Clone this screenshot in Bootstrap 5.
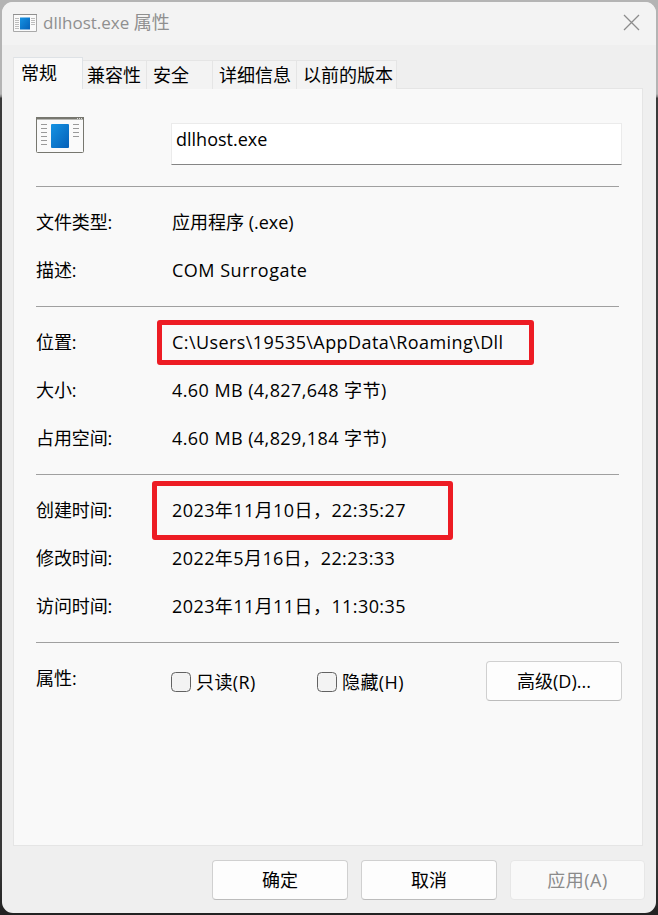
<!DOCTYPE html>
<html lang="zh-CN">
<head>
<meta charset="utf-8">
<meta name="viewport" content="width=device-width, initial-scale=1">
<title>dllhost.exe 属性</title>
<link href="https://cdn.jsdelivr.net/npm/bootstrap@5.3.0/dist/css/bootstrap.min.css" rel="stylesheet">
<style>
body{height:915px;overflow:hidden;padding:2px;font:18px/24px "Open Sans","Noto Sans CJK SC",sans-serif;color:#000;
background:linear-gradient(#b4b4b4 0,#b4b4b4 94px,#777 97px,#3a3a3a 98px,#383838 860px,#222 915px)}
.dialog{height:911px;background:#efefef;border-radius:11px}
.titlebar{height:43px;background:#f3f3f3;color:#8f8f8f;padding:0 16px 2px 11px}
.titlebar .caption{margin-left:6px;font-size:17px}
.caption .zh{font-size:18px}
.tabs{height:31px;margin:12px 11px 0;position:relative;z-index:1}
.tabs .nav-link{height:29px;padding:2px 0 0 6px;color:#000;background:#f3f3f3;border:1px solid #e5e5e5;border-left:0;border-bottom:0;border-radius:0;line-height:24px;white-space:nowrap}
.tabs .nav-link.active{height:32px;width:70px;padding:3px 0 0 7px;background:#f9f9f9;border-left:1px solid #e5e5e5;margin-bottom:-1px}
.tabs .t2{width:64px;padding-left:4px}.t3{width:66px}.t4{width:84px}.t5{width:100px}
.sheet{height:758px;margin:0 13px 0 11px;padding:28px 22px 0;background:#f9f9f9;border:1px solid #e5e5e5}
.head{height:69px}
.name{width:451px;height:42px;margin:6px -2px 0 0;padding:3px 4px 13px;background:#fff;border:1px solid #ebebeb;border-bottom-color:#858585;border-radius:0;font:inherit;line-height:24px;color:#000}
.group{border-top:1px solid #a0a0a0;padding:12px 0 11px;margin:0 1px 0 0}
.item{height:48px;padding-bottom:2px}
.item dt{width:136px;font-weight:400;letter-spacing:-.1px}
.item dd{margin:0;white-space:nowrap;position:relative;letter-spacing:.42px}
.item .plain{letter-spacing:0}
.item .wide{letter-spacing:.5px}
.ring{position:absolute;border:5px solid #ed1c24;border-radius:3px}
.ring-path{left:-15px;top:-10px;width:377px;height:45px}
.ring-date{left:-20px;top:-17px;width:301px;height:59px}
.tick{width:20px;height:20px;margin:0 5px 0 0;border:1px solid #626262;border-radius:4px;background:#f3f3f3;float:none}
.opt{width:146px;height:24px;margin-top:9px;letter-spacing:.4px}
.push{width:136px;height:40px;padding:0;border:1px solid #d0d0d0;border-bottom-color:#bcbcbc;border-radius:4px;background:#fdfdfd;color:#000;font:inherit}
.push:disabled{width:135px;background:#f9f9f9;border-color:#e7e7e7;color:#8b8b8b;opacity:1;letter-spacing:.5px}
.attrs{margin:6px -3px 0 0}
.attrs .attr-name{width:135px;padding-top:5px}
.actions{gap:13px;padding:14px 11px 0 0}
</style>
<script src="https://cdn.jsdelivr.net/npm/bootstrap@5.3.0/dist/js/bootstrap.bundle.min.js"></script>
</head>
<body>
<svg width="0" height="0" class="position-absolute" aria-hidden="true">
<defs>
<linearGradient id="blue" x1="0" y1="0" x2="1" y2="1"><stop stop-color="#1593e3"/><stop offset="1" stop-color="#0560b8"/></linearGradient>
</defs>
</svg>
<main class="dialog overflow-hidden">
<header class="titlebar d-flex align-items-center">
<svg width="24" height="18" viewBox="0 0 24 18"><path fill="#fafafa" stroke="#a9a9a9" d="M.5.5h23v17H.5z"/><path stroke="#909090" d="M0 .5h24"/><path stroke="#bdbdbd" d="M2 4.5h4M2 6.5h4M2 8.5h4M2 10.5h4M2 12.5h4M2 14.5h4M18 4.5h4M18 6.5h4M18 8.5h4M18 10.5h4"/><path fill="url(#blue)" d="M7 3.5h10v12H7z"/></svg>
<span class="caption">dllhost.exe <span class="zh">属性</span></span>
<svg class="ms-auto" width="17" height="17" viewBox="0 0 17 17"><path stroke="#8c8c8c" stroke-width="1.3" d="M1 1l15 15M16 1L1 16"/></svg>
</header>
<nav class="tabs nav nav-tabs border-0 align-items-end flex-nowrap">
<a class="nav-link active">常规</a><a class="nav-link t2">兼容性</a><a class="nav-link t3">安全</a><a class="nav-link t4">详细信息</a><a class="nav-link t5">以前的版本</a>
</nav>
<section class="sheet">
<div class="head d-flex justify-content-between align-items-start">
<svg width="48" height="36" viewBox="0 0 48 36"><rect x=".5" y=".5" width="47" height="35" rx="1" fill="#fafafa" stroke="#77776f"/><path fill="#77776f" d="M0 0h48v2.5H0z"/><path stroke="#ddd" d="M41 1.5h1M43 1.5h1M45 1.5h1"/><path stroke="#999" d="M5 7.5h6M5 11.5h6M5 15.5h6M5 19.5h6M5 23.5h6M5 27.5h6M37 7.5h6M37 11.5h6M37 15.5h6M37 19.5h6"/><rect x="15" y="7" width="18" height="24" rx="1" fill="url(#blue)"/></svg>
<input class="name form-control" value="dllhost.exe" aria-label="文件名">
</div>
<dl class="group">
<div class="item d-flex align-items-center"><dt>文件类型:</dt><dd class="plain">应用程序 (.exe)</dd></div>
<div class="item d-flex align-items-center"><dt>描述:</dt><dd class="wide">COM Surrogate</dd></div>
</dl>
<dl class="group">
<div class="item d-flex align-items-center"><dt>位置:</dt><dd>C:\Users\19535\AppData\Roaming\Dll<span class="ring ring-path"></span></dd></div>
<div class="item d-flex align-items-center"><dt>大小:</dt><dd>4.60 MB (4,827,648 字节)</dd></div>
<div class="item d-flex align-items-center"><dt>占用空间:</dt><dd>4.60 MB (4,829,184 字节)</dd></div>
</dl>
<dl class="group">
<div class="item d-flex align-items-center"><dt>创建时间:</dt><dd>2023年11月10日，22:35:27<span class="ring ring-date"></span></dd></div>
<div class="item d-flex align-items-center"><dt>修改时间:</dt><dd>2022年5月16日，22:23:33</dd></div>
<div class="item d-flex align-items-center"><dt>访问时间:</dt><dd>2023年11月11日，11:30:35</dd></div>
</dl>
<div class="group">
<div class="attrs d-flex align-items-start">
<span class="attr-name">属性:</span>
<label class="opt d-flex align-items-center"><input type="checkbox" class="tick form-check-input">只读(R)</label>
<label class="opt d-flex align-items-center"><input type="checkbox" class="tick form-check-input">隐藏(H)</label>
<button class="push btn ms-auto">高级(D)...</button>
</div>
</div>
</section>
<footer class="actions d-flex justify-content-end">
<button class="push btn">确定</button>
<button class="push btn">取消</button>
<button class="push btn" disabled>应用(A)</button>
</footer>
</main>
</body>
</html>
